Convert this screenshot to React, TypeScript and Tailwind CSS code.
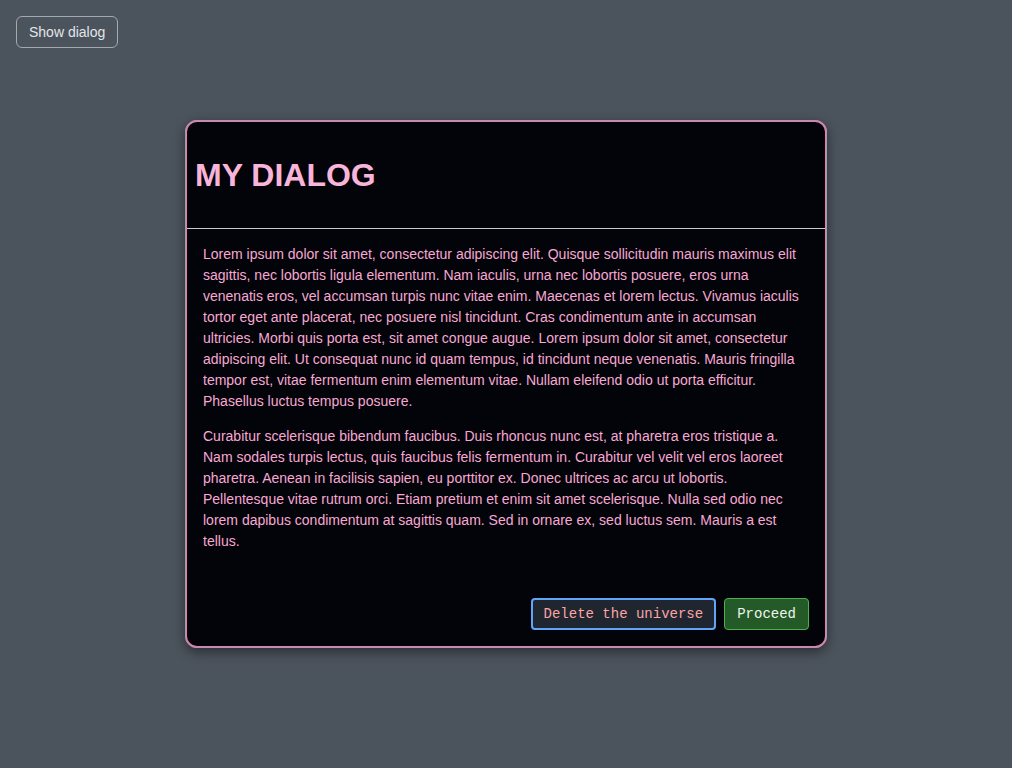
export default function App() {
  return (
    <div className="min-h-screen bg-[#4b535c] p-4 font-['Liberation_Sans',Arial,sans-serif]">
      <button className="h-8 px-3 rounded-md border border-[#a3a9b1] text-sm text-[#e2e5e9]">
        Show dialog
      </button>

      <div className="flex justify-center mt-[72px]">
        <div className="w-[642px] rounded-xl border-2 border-[#f472b6] outline outline-1 outline-[#9aa0aa] -outline-offset-1 bg-[#020409] shadow-[0_4px_12px_rgba(0,0,0,0.45)] overflow-hidden">
          <div className="h-[107px] flex items-center pl-2 pb-px border-b border-[#c7cbd6]">
            <h1 className="text-[32px] font-bold text-[#f9b4d9] leading-none">MY DIALOG</h1>
          </div>
          <div className="px-4 pt-[15px] text-sm leading-[21px] text-[#f9a8d4]">
            <p>
              Lorem ipsum dolor sit amet, consectetur adipiscing elit. Quisque sollicitudin mauris maximus elit sagittis, nec lobortis ligula elementum. Nam iaculis, urna nec lobortis posuere, eros urna venenatis eros, vel accumsan turpis nunc vitae enim. Maecenas et lorem lectus. Vivamus iaculis tortor eget ante placerat, nec posuere nisl tincidunt. Cras condimentum ante in accumsan ultricies. Morbi quis porta est, sit amet congue augue. Lorem ipsum dolor sit amet, consectetur adipiscing elit. Ut consequat nunc id quam tempus, id tincidunt neque venenatis. Mauris fringilla tempor est, vitae fermentum enim elementum vitae. Nullam eleifend odio ut porta efficitur. Phasellus luctus tempus posuere.
            </p>
            <p className="mt-[14px]">
              Curabitur scelerisque bibendum faucibus. Duis rhoncus nunc est, at pharetra eros tristique a. Nam sodales turpis lectus, quis faucibus felis fermentum in. Curabitur vel velit vel eros laoreet pharetra. Aenean in facilisis sapien, eu porttitor ex. Donec ultrices ac arcu ut lobortis. Pellentesque vitae rutrum orci. Etiam pretium et enim sit amet scelerisque. Nulla sed odio nec lorem dapibus condimentum at sagittis quam. Sed in ornare ex, sed luctus sem. Mauris a est tellus.
            </p>
          </div>
          <div className="flex justify-end gap-2 px-4 pt-[46px] pb-4 font-['Liberation_Mono','Courier_New',monospace] text-sm">
            <button className="h-8 px-[11px] rounded border-2 border-[#60a5fa] bg-[#1f2630] text-[#fca5a5]">
              Delete the universe
            </button>
            <button className="h-8 px-3 rounded border border-[#4caf50] bg-[#245a27] text-[#eef5ee]">
              Proceed
            </button>
          </div>
        </div>
      </div>
    </div>
  );
}
